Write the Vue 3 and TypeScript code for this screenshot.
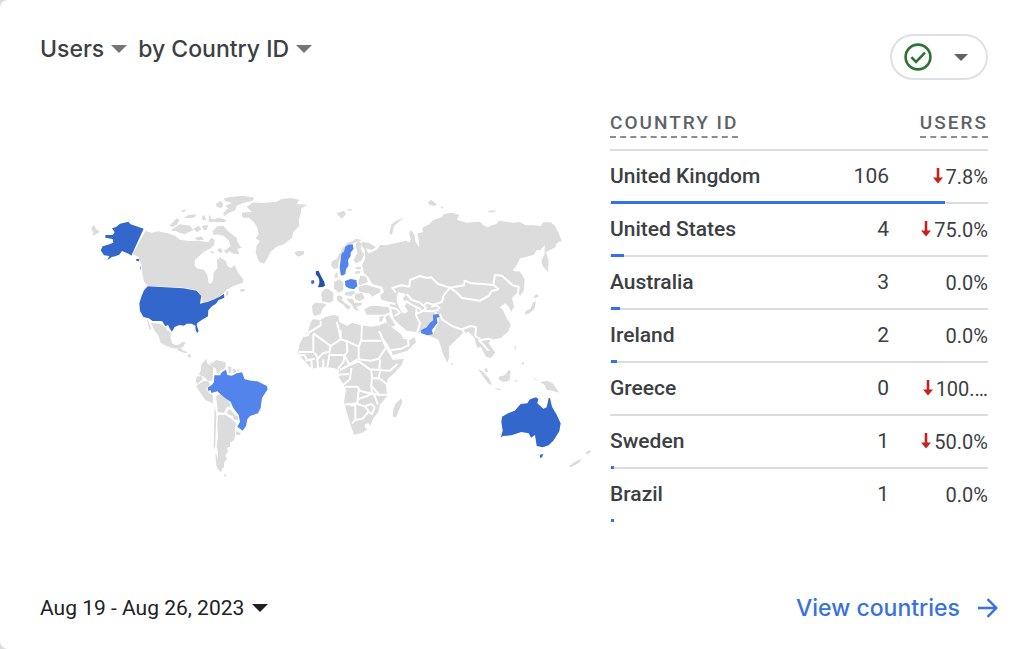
<script setup lang="ts">
interface Row {
  country: string
  users: number
  change: string
  down: boolean
}

const rows: Row[] = [
  { country: 'United Kingdom', users: 106, change: '7.8%', down: true },
  { country: 'United States', users: 4, change: '75.0%', down: true },
  { country: 'Australia', users: 3, change: '0.0%', down: false },
  { country: 'Ireland', users: 2, change: '0.0%', down: false },
  { country: 'Greece', users: 0, change: '100.…', down: true },
  { country: 'Sweden', users: 1, change: '50.0%', down: true },
  { country: 'Brazil', users: 1, change: '0.0%', down: false },
]

const scaleMax = 120
const barWidth = (users: number): string => `${(users / scaleMax) * 100}%`
</script>

<template>
  <main class="card">
    <header class="top">
      <h1 class="title">
        <button type="button" class="picker">
          Users
          <svg class="caret" viewBox="0 0 16 8" aria-hidden="true"><path d="M0 0h16L8 8z" /></svg>
        </button>
        <button type="button" class="picker">
          by Country ID
          <svg class="caret" viewBox="0 0 16 8" aria-hidden="true"><path d="M0 0h16L8 8z" /></svg>
        </button>
      </h1>
      <button type="button" class="status" aria-label="Data quality">
        <svg class="check" viewBox="0 0 28 28" aria-hidden="true">
          <circle cx="14" cy="14" r="12.4" />
          <path d="M7.4 14.2l4.6 4.7 9-9.2" />
        </svg>
        <svg class="status-caret" viewBox="0 0 14 7" aria-hidden="true"><path d="M0 0h14L7 7z" /></svg>
      </button>
    </header>

    <section class="content">
      <svg class="map" viewBox="0 0 1545 900" role="img" aria-label="Users by country">
        <!-- North America -->
        <g class="land">
          <path d="M196 138L215 143L235 139L262 145L285 152L300 164L325 168L355 167L385 172L394 158L404 164L403 180L392 190L372 200L345 225L344 240L350 250L372 254L382 270L386 295L394 296L400 282L400 265L412 250L411 225L420 217L437 228L443 244L454 249L463 240L475 264L490 283L488 294L460 303L440 315L428 326L412 338L395 345L367 354L366 335L352 316L310 308L203 302L192 290L187 265L185 240L175 215L158 208Z" />
          <path d="M36 125L44 121L48 132L60 140L48 148L38 152L40 142L34 134Z" />
          <path d="M268 122L290 100L298 104L292 118L278 126Z" />
          <path d="M276 133L300 118L330 122L340 136L325 142L315 148L300 144L288 138L276 138Z" />
          <path d="M300 78L318 73L312 82ZM312 98L326 90L348 88L345 97L326 100ZM340 132L356 122L364 132L352 142ZM366 122L384 120L380 136L370 134ZM366 94L374 90L378 104L368 106ZM386 88L392 96L398 110L388 112ZM345 158L365 154L372 164L352 166Z" />
          <path d="M398 138L412 124L430 122L440 134L452 145L470 158L472 170L484 188L472 192L478 208L460 206L448 198L440 206L432 198L452 184L446 166L430 152L412 148L400 150Z" />
          <path d="M384 104L402 102L416 98L438 104L436 111L410 112L388 108ZM390 198L404 200L398 206ZM411 195L420 188L430 200L420 204Z" />
          <path d="M408 56L422 48L430 58L425 69L410 66ZM432 40L450 36L490 32L523 38L518 47L490 54L470 62L466 76L446 84L432 94L430 84L444 70L436 62L456 54L434 48Z" />
          <path d="M438 320L445 317L445 330L438 332ZM480 314L490 311L496 318L482 320Z" />
          <path d="M485 83L515 80L500 65L520 52L552 54L590 50L605 42L635 39L658 45L650 56L682 60L664 70L662 88L656 106L658 122L640 142L636 158L612 178L592 184L572 200L563 218L552 236L537 230L527 204L530 182L540 168L527 160L536 148L532 128L522 112L506 98L488 98Z" />
          <path d="M644 202L652 200L672 198L672 208L655 215L648 210Z" />
        </g>
        <g fill="#3367cb">
          <path d="M96 130L108 126L120 116L145 110L152 118L191 131L154 212L146 206L138 203L126 198L118 209L108 213L96 216L82 225L88 213L72 211L62 196L68 184L84 179L100 173L98 162L76 158L76 150L98 150L104 142Z" />
          <path d="M168 222L178 222L177 229L170 228ZM180 243L183 250L181 254Z" />
          <path d="M203 304L310 310L350 317L364 333L360 356L384 350L405 342L424 332L432 326L433 338L415 346L408 356L396 364L385 376L384 394L364 406L352 414L350 420L356 438L352 444L347 436L346 422L335 416L320 416L312 422L298 420L284 426L276 440L270 432L264 420L256 424L246 408L218 408L206 400L190 396L180 378L178 355L184 335L192 316Z" />
        </g>

        <!-- Central and South America -->
        <g transform="translate(150 405)" class="land">
          <path d="M62 8L92 12L106 20L112 32L122 36L122 54L126 70L138 76L150 72L156 66L167 66L160 80L145 86L125 84L105 76L92 68L86 48L74 32ZM50 0L55 2L64 26L60 30Z" />
          <path d="M140 88L152 84L160 92L174 96L166 100L150 94ZM172 104L180 102L184 112L174 112Z" />
          <path d="M214 134L228 116L232 130L248 140L250 152L248 172L246 182L234 182L222 170L206 164L212 152Z" />
          <path d="M238 126L246 130L258 120L286 126L288 138L282 147L270 152L266 162L260 158L258 146L244 138Z" />
          <path d="M294 138L304 142L304 160L296 160ZM308 146L318 148L318 157L308 160ZM322 146L330 152L322 155Z" />
          <path d="M200 170L214 168L218 178L202 192L197 184Z" />
          <path d="M198 198L222 182L234 184L240 192L228 206L238 220L248 224L249 250L226 240L212 220Z" />
          <path d="M258 228L272 222L292 238L304 258L290 262L282 278L264 276Z" />
          <path d="M292 273L300 268L312 282L326 292L323 302L312 298L308 288L292 282Z" />
          <path d="M264 286L284 284L306 298L318 310L314 330L316 348L312 360L300 368L300 380L290 384L294 394L286 406L290 418L282 428L282 442L272 450L264 430L264 400L260 378L264 350L262 318Z" />
          <path d="M318 334L332 338L330 346L317 344Z" />
          <path d="M254 258L259 286L257 340L255 388L251 380L252 320ZM256 402L262 408L265 434L277 452L270 456L259 438ZM282 460L290 468L284 470Z" />
          <path fill="#5284eb" d="M233 203L246 194L252 186L253 166L270 166L276 156L288 149L292 165L305 167L320 160L336 157L344 178L364 182L382 184L411 198L413 208L396 234L392 264L384 280L360 288L352 298L348 318L338 332L322 320L330 305L326 285L310 264L302 246L282 232L262 214L244 219L242 211L234 212Z" />
        </g>

        <!-- Europe and Asia -->
        <g transform="translate(630 15)">
          <g class="land">
            <path d="M140 70L162 62L168 72L156 86L144 76ZM168 58L188 58L180 63ZM298 132L304 104L318 92L342 84L326 96L312 108L306 134ZM414 36L424 30L440 42L434 48L418 44ZM450 50L460 50L458 56ZM594 62L618 61L612 67L596 67Z" />
            <path d="M126 214L140 206L150 190L158 174L172 158L188 154L198 146L216 150L208 154L190 160L174 168L162 182L152 200L146 216L144 234L132 238L123 226Z" />
            <path d="M196 164L206 152L214 160L212 176L222 194L214 212L198 220L190 210L202 190Z" />
            <path d="M217 155L240 160L258 172L245 180L228 175L235 190L248 185L262 178L270 165L290 166L320 158L350 152L358 158L362 148L357 130L364 120L374 136L376 154L388 172L386 150L382 130L400 126L396 114L415 104L430 90L455 82L462 72L485 68L508 74L500 90L530 98L570 95L580 106L594 112L606 106L620 102L626 92L670 98L690 96L706 106L730 106L752 108L760 97L782 97L796 108L806 130L815 152L800 160L796 172L768 186L776 214L774 246L758 228L754 212L764 192L764 166L752 180L740 180L732 194L710 200L690 205L680 226L668 242L690 245L704 266L702 300L690 318L684 305L666 324L672 350L664 366L656 350L645 340L630 352L640 362L650 385L662 403L656 424L632 444L604 450L595 458L616 488L602 504L588 500L572 470L562 474L552 442L535 426L518 430L500 448L477 470L478 502L472 518L460 494L446 450L434 444L410 434L376 425L350 422L326 402L312 386L306 366L300 345L290 334L276 332L270 316L282 306L276 290L246 282L236 262L222 250L216 226L226 205L224 180L214 166Z" />
            <path d="M222 358L242 348L266 348L296 352L300 366L284 374L256 374L230 374Z" />
            <path d="M132 276L148 268L160 276L160 300L146 308L132 296Z" />
            <path d="M94 308L104 296L114 296L130 308L130 332L118 338L96 334Z" />
            <path d="M66 348L74 338L98 340L110 344L98 356L92 372L74 378L68 370Z" />
            <path d="M134 254L142 246L144 262L134 264ZM140 320L148 316L158 322L156 330L164 338L182 350L174 360L160 344L142 332ZM164 308L190 302L196 308L184 318L166 316ZM196 312L216 308L224 324L208 334L194 326ZM168 326L188 326L194 340L190 350L180 338ZM196 338L216 338L214 346L200 350L206 362L196 360L188 350Z" />
            <path d="M206 270L212 256L228 260L234 276L214 284L206 284ZM206 290L228 284L248 290L270 296L272 306L256 314L246 320L238 310L224 308L206 304ZM196 232L212 230L212 238L198 238ZM196 244L212 242L210 250L196 252Z" />
            <path d="M14 186L34 182L42 186L36 194L18 196Z" />
            <path d="M734 316L742 312L746 320L730 324ZM728 338L738 334L734 356L718 370L704 374L708 362L722 356Z" />
          </g>
          <g class="gap">
            <path d="M318 308L307 294L334 286L358 290L360 270L390 258L410 264L424 262L444 282L480 293L522 286L524 272L544 280L580 282L610 285L615 255L636 257L668 286L686 290L684 308" />
            <path d="M480 293L498 306L516 324L570 332L596 318L604 304L625 298L612 286" />
            <path d="M480 293L460 318L456 336L430 344L410 338L400 348M350 312L366 330L390 338L408 354L400 364M346 332L364 344L390 356L396 366M424 350L440 346L450 356" />
            <path d="M274 332L296 338L316 342M298 352L318 356L330 368L314 378M380 356L378 376L390 400L382 426M376 374L400 362L428 364L446 360" />
            <path d="M450 372L456 388L486 408L514 418L542 408L558 412L556 438L574 450L594 446L608 450M518 418L524 434M566 450L580 464L598 486M436 366L444 392L426 432" />
            <path class="sea" d="M326 310L344 314L334 326L346 340L340 348L350 364L340 368L330 352L322 330Z" />
          </g>
          <path fill="#5284eb" d="M152 254L149 232L152 208L154 192L162 184L166 170L175 164L188 163L191 176L182 188L182 198L174 210L176 226L168 238L166 252L156 257ZM165 273L182 267L199 270L202 288L192 298L176 295L166 288Z" />
          <path fill="#2450a8" d="M77 244L86 242L90 252L95 262L103 276L105 287L98 291L84 292L88 280L88 270L84 260L78 254Z" />
          <path fill="#3367cb" d="M63 272L72 270L73 279L65 283Z" />
        </g>

        <!-- Africa and Arabia -->
        <g transform="translate(630 315)">
          <g class="land">
            <path d="M62 96L70 87L90 91L104 82L132 75L145 78L148 96L172 108L186 98L210 105L245 110L268 106L274 124L264 124L284 170L300 195L308 210L342 206L334 226L314 248L294 266L288 288L292 318L270 344L264 368L250 384L240 410L218 428L192 434L185 415L170 366L162 338L168 300L158 280L146 260L148 240L130 234L110 232L85 232L65 236L45 215L24 190L28 164L40 140L54 126Z" />
            <path d="M270 104L288 98L296 104L316 120L334 134L340 146L360 150L374 142L378 156L352 182L308 196L304 182L292 162L280 144L270 120Z" />
            <path d="M333 325L337 336L328 358L318 382L308 380L310 356L318 340Z" />
            <path d="M268 80L282 78L276 94L268 96ZM286 80L296 74L304 86L316 106L304 110L290 98Z" />
          </g>
          <g class="gap">
            <path d="M92 92L92 106L56 128L54 136L36 138M70 132L70 186L26 186M70 130L122 168L118 186L98 190L84 206L74 188M122 168L152 148L146 116L140 96M152 120L152 148L172 154L206 170L214 150L216 104M215 152L274 152" />
            <path d="M170 152L172 186L164 196L118 194L112 232M164 196L160 216L144 236M206 170L206 206L178 224L164 198M206 208L242 212L266 206L286 176M150 240L176 226L206 214L240 238L268 240L270 208M268 240L300 242L322 222M82 206L84 234M100 208L100 234M46 212L74 206M24 194L44 196L50 208M64 210L66 236" />
            <path d="M146 254L176 252M184 234L180 268L160 284M244 240L246 262L244 288L246 312L210 302L202 290L164 290M206 300L202 340L162 344M202 328L232 318L246 310L270 316M246 264L270 266L294 286M246 290L268 314L292 314M252 314L264 344M202 342L226 350L236 364L218 386L196 390L196 346L180 346M226 348L244 342L254 352L246 372L236 366M196 390L186 400M270 244L266 264M304 180L334 176L356 166L354 150" />
            <circle class="sea" cx="232" cy="408" r="5" />
          </g>
          <path fill="#5284eb" d="M429 74L445 72L449 80L440 84L443 98L432 112L425 120L429 133L412 136L394 130L393 121L410 112L420 98L430 91Z" />
        </g>

        <!-- South East Asia and Oceania -->
        <g transform="translate(1020 345)">
          <g class="land">
            <path d="M174 206L190 216L208 236L216 254L206 252L188 228ZM194 204L202 206L204 216L196 216ZM236 230L254 226L266 210L272 214L268 242L252 246L238 240ZM222 264L246 268L236 270ZM282 138L288 140L286 152ZM304 188L314 188L308 196ZM340 234L358 243L346 240ZM360 246L380 242L398 250L418 278L396 272L380 270L374 256Z" />
            <path d="M200 152L222 154L214 170L206 166ZM92 188L100 192L96 198ZM284 240L290 240L288 248Z" />
            <path d="M496 458L508 450L512 456L502 464ZM446 500L460 488L484 476L480 486L454 502Z" />
          </g>
          <path fill="#3367cb" d="M246 350L264 340L284 332L302 312L322 310L330 298L348 292L355 297L352 310L370 326L380 322L386 294L390 294L396 320L410 344L422 370L418 394L400 422L386 436L368 442L350 438L345 405L333 413L326 400L304 396L275 406L248 408L242 414L248 392L244 366ZM360 464L370 462L366 472L360 474Z" />
        </g>
      </svg>

      <table class="stats">
        <thead>
          <tr>
            <th scope="col" class="name"><span>Country ID</span></th>
            <th scope="col" colspan="2" class="num"><span>Users</span></th>
          </tr>
        </thead>
        <tbody>
          <tr v-for="row in rows" :key="row.country">
            <th scope="row" class="name">
              {{ row.country }}
              <i v-if="row.users" class="bar" :style="{ width: barWidth(row.users) }"></i>
            </th>
            <td class="num">{{ row.users }}</td>
            <td class="change">
              <svg v-if="row.down" class="down" viewBox="0 0 10 16" aria-label="down"><path d="M3.700 0h2.600v9.500H10l-5 6-5-6h3.700z" /></svg>{{ row.change }}
            </td>
          </tr>
        </tbody>
      </table>
    </section>

    <footer class="bottom">
      <button type="button" class="range">
        Aug 19 - Aug 26, 2023
        <svg class="caret" viewBox="0 0 16 8" aria-hidden="true"><path d="M0 0h16L8 8z" /></svg>
      </button>
      <a href="#countries" class="more">
        View countries
        <svg class="arrow" viewBox="0 0 20 20" aria-hidden="true"><path d="M0 10h18M9.500 1.200L18.300 10l-8.800 8.800" /></svg>
      </a>
    </footer>
  </main>
</template>

<style>
body {
  margin: 0;
  background: #dadce0;
}
</style>

<style scoped>
.card {
  box-sizing: border-box;
  min-height: 100vh;
  display: flex;
  flex-direction: column;
  padding: 34px 36px 25px 40px;
  border-radius: 8px 0 0 8px;
  background: #fff;
  color: #3c4043;
  font-family: Roboto, "Liberation Sans", sans-serif;
}

button {
  padding: 0;
  border: 0;
  background: none;
  color: inherit;
  font: inherit;
  cursor: pointer;
}

.top {
  display: flex;
  justify-content: space-between;
  align-items: flex-start;
}

.title {
  display: flex;
  gap: 11px;
  margin: 0;
  font: 500 23px/30px Inter, Roboto, sans-serif;
}

.picker,
.range {
  display: flex;
  align-items: center;
  gap: 8px;
}

.picker {
  gap: 7px;
}

.caret {
  width: 16px;
  height: 8px;
  fill: #757575;
}

.status {
  box-sizing: border-box;
  width: 98px;
  height: 46px;
  display: flex;
  align-items: center;
  gap: 22px;
  padding-left: 12px;
  border: 2px solid #dfe0e5;
  border-radius: 23px;
}

.check {
  width: 28px;
  height: 28px;
  fill: none;
  stroke: #2b7434;
  stroke-width: 2.6;
}

.status-caret {
  width: 14px;
  height: 7px;
  fill: #5f6368;
}

.content {
  display: grid;
  grid-template-columns: minmax(0, 1fr) 378px;
  gap: 15px;
  align-items: start;
  padding-top: 26px;
}

.map {
  width: calc(100% - 40px);
  margin: 79px 0 0 40px;
}

.land {
  fill: #dcdcdc;
}

.gap {
  fill: none;
  stroke: #fff;
  stroke-width: 6;
  stroke-linejoin: round;
}

.sea {
  fill: #fff;
}

.stats {
  width: 100%;
  border-collapse: separate;
  border-spacing: 0;
  table-layout: fixed;
}

.stats tr {
  position: relative;
}

.stats th,
.stats td {
  box-sizing: border-box;
  height: 53px;
  padding: 0 0 2px;
  border-bottom: 2px solid #dadce0;
  vertical-align: middle;
}

.stats tbody tr:last-child > * {
  border-bottom-color: transparent;
}

.stats thead th {
  height: 45px;
  padding: 4px 0 0;
  color: #5f6368;
  font-size: 19px;
  font-weight: 500;
  line-height: 26px;
  letter-spacing: 2px;
  text-transform: uppercase;
  vertical-align: top;
}

.stats thead span {
  display: inline-block;
  border-bottom: 2px dashed #8a8d91;
}

.stats .name {
  width: 200px;
  text-align: left;
}

.stats tbody .name {
  font-size: 21px;
  font-weight: 500;
}

.stats .num {
  text-align: right;
}

.stats tbody .num {
  padding-right: 10px;
  font-size: 21px;
}

.stats .change {
  padding-top: 2px;
  font-size: 20px;
  text-align: right;
  white-space: nowrap;
}

.down {
  width: 10px;
  height: 16px;
  margin-right: 3px;
  fill: #c5221f;
}

.bar {
  position: absolute;
  left: 1px;
  bottom: 0;
  height: 3px;
  background: #3871e0;
}

.bottom {
  display: flex;
  justify-content: space-between;
  align-items: center;
  margin-top: auto;
  margin-right: -10px;
  line-height: 32px;
}

.range {
  color: #202124;
  font-size: 21px;
}

.range .caret {
  fill: #202124;
}

.more {
  display: flex;
  align-items: center;
  gap: 18px;
  color: #3871e0;
  font-family: Inter, Roboto, sans-serif;
  font-size: 23px;
  font-weight: 500;
  text-decoration: none;
}

.arrow {
  width: 20px;
  height: 20px;
  fill: none;
  stroke: #3871e0;
  stroke-width: 2.4;
}
</style>
